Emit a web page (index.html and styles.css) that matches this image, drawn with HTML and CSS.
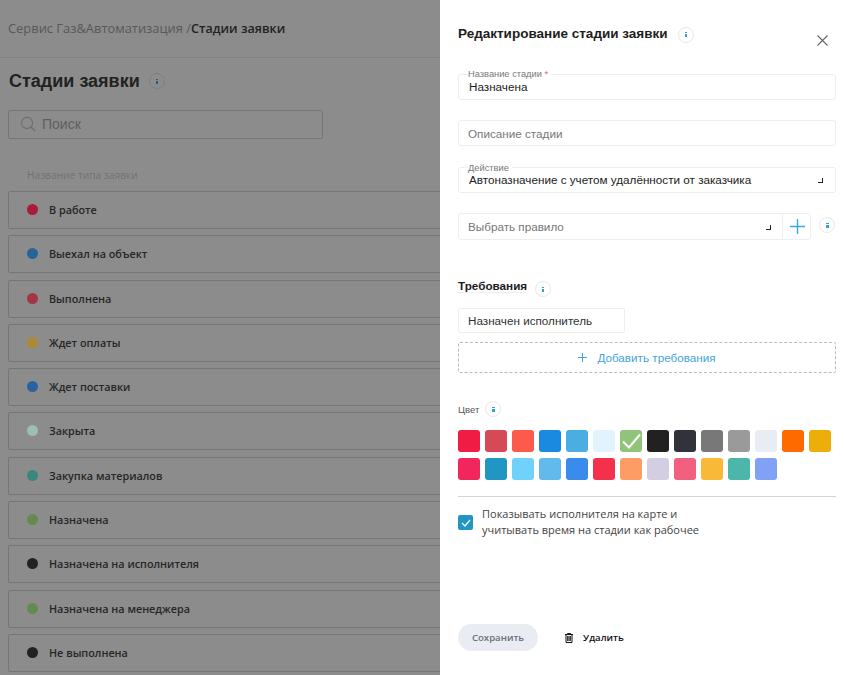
FILE: index.html
```html
<!DOCTYPE html>
<html lang="ru">
<head>
  <meta charset="UTF-8" />
  <title>Стадии заявки</title>
  <link rel="stylesheet" href="styles.css">
</head>
<body>
  <main class="page">
    <header class="topbar">
      <span class="crumb">Сервис Газ&amp;Автоматизация /</span><span class="crumb-current">Стадии заявки</span>
    </header>

    <div class="title-row">
      <h1>Стадии заявки</h1>
      <span class="info info-dim"><i></i></span>
    </div>

    <div class="search">
      <svg width="16" height="16" viewBox="0 0 16 16" fill="none" stroke="#6e6e6e" stroke-width="1.1">
        <circle cx="7" cy="7" r="5.6" />
        <path d="M11 11l4 4" />
      </svg>
      <span>Поиск</span>
    </div>

    <div class="table-head">Название типа заявки</div>

    <ul class="stages">
      <li><span class="dot" style="background:#ab1c3a"></span>В работе</li>
      <li><span class="dot" style="background:#28649c"></span>Выехал на объект</li>
      <li><span class="dot" style="background:#a03646"></span>Выполнена</li>
      <li><span class="dot" style="background:#ad8936"></span>Ждет оплаты</li>
      <li><span class="dot" style="background:#2a62a0"></span>Ждет поставки</li>
      <li><span class="dot" style="background:#a0bcb8"></span>Закрыта</li>
      <li><span class="dot" style="background:#3a877e"></span>Закупка материалов</li>
      <li><span class="dot" style="background:#648a50"></span>Назначена</li>
      <li><span class="dot" style="background:#222"></span>Назначена на исполнителя</li>
      <li><span class="dot" style="background:#648a50"></span>Назначена на менеджера</li>
      <li><span class="dot" style="background:#222"></span>Не выполнена</li>
    </ul>
  </main>

  <aside class="panel">
    <div class="panel-head">
      <h2>Редактирование стадии заявки</h2>
      <span class="info"><i></i></span>
      <svg class="close" width="11" height="11" viewBox="0 0 11 11" stroke="#666" stroke-width="1.1">
        <path d="M.5.5l10 10M10.5.5l-10 10" />
      </svg>
    </div>

    <div class="field field-name">
      <label>Название стадии <em>*</em></label>
      <span class="value">Назначена</span>
    </div>

    <div class="field field-desc">
      <span class="placeholder">Описание стадии</span>
    </div>

    <div class="field field-action">
      <label>Действие</label>
      <span class="value">Автоназначение с учетом удалённости от заказчика</span>
      <b class="caret"></b>
    </div>

    <div class="rule-row">
      <div class="field field-rule">
        <span class="placeholder">Выбрать правило</span>
        <b class="caret"></b>
        <span class="rule-add">
          <svg width="15" height="15" viewBox="0 0 15 15" stroke="#3ea6dc" stroke-width="1.4">
            <path d="M7.5 0v15M0 7.5h15" />
          </svg>
        </span>
      </div>
      <span class="info info-blue"><i></i></span>
    </div>

    <div class="req-head">
      <h3>Требования</h3>
      <span class="info"><i></i></span>
    </div>

    <div class="req-chip">Назначен исполнитель</div>

    <div class="req-add">
      <svg width="9" height="9" viewBox="0 0 9 9" stroke="#3ea6dc" stroke-width="1">
        <path d="M4.5 0v9M0 4.5h9" />
      </svg>
      Добавить требования
    </div>

    <div class="color-head">
      <span>Цвет</span>
      <span class="info info-blue"><i></i></span>
    </div>

    <div class="swatches">
      <span style="background:#f01c44"></span>
      <span style="background:#d64a58"></span>
      <span style="background:#fb5a4d"></span>
      <span style="background:#1a8ae0"></span>
      <span style="background:#4aaee2"></span>
      <span style="background:#e2f3fd"></span>
      <span style="background:#90c478">
        <svg width="22" height="22" viewBox="0 0 22 22" fill="none" stroke="#fff" stroke-width="2">
          <path d="M3 11.5l6 6L20 4.5" />
        </svg>
      </span>
      <span style="background:#212121"></span>
      <span style="background:#32323a"></span>
      <span style="background:#787878"></span>
      <span style="background:#9a9a9a"></span>
      <span style="background:#e8edf4"></span>
      <span style="background:#ff6a00"></span>
      <span style="background:#eeae0a"></span>
      <span style="background:#f0265c"></span>
      <span style="background:#2196c4"></span>
      <span style="background:#70d2fb"></span>
      <span style="background:#62baec"></span>
      <span style="background:#3a8cec"></span>
      <span style="background:#f4304c"></span>
      <span style="background:#fe9c66"></span>
      <span style="background:#d4cee2"></span>
      <span style="background:#f26080"></span>
      <span style="background:#f8b838"></span>
      <span style="background:#4cb6aa"></span>
      <span style="background:#80a2f4"></span>
    </div>

    <div class="check-row">
      <span class="checkbox">
        <svg width="10" height="8" viewBox="0 0 10 8" fill="none" stroke="#fff" stroke-width="1.2">
          <path d="M1 4l3 3 5-6" />
        </svg>
      </span>
      <p>Показывать исполнителя на карте и<br>учитывать время на стадии как рабочее</p>
    </div>

    <div class="actions">
      <button class="save">Сохранить</button>
      <button class="remove">
        <svg width="8" height="10" viewBox="0 0 8 10" fill="none" stroke="#111" stroke-width="1">
          <path d="M0 1.5h8M2.5 1.5V.5h3v1M1 1.5v8h6v-8M2.7 3v5M4 3v5M5.3 3v5" />
        </svg>
        Удалить
      </button>
    </div>
  </aside>
</body>
</html>
```

FILE: styles.css
```css
* {
  box-sizing: border-box;
}

html, body {
  height: 100%;
}

body {
  margin: 0;
  height: 675px;
  overflow: hidden;
  background-color: #8c8c8c;
  color: #262626;
  font-family: 'Open Sans', 'Noto Sans', sans-serif;
}

/* dimmed page behind the panel */
.page {
  width: 844px;
}

.topbar {
  height: 58px;
  padding: 19px 8px 0;
  border-bottom: 1px solid #808080;
  font-size: 12.9px;
  line-height: 18px;
}

.crumb {
  color: #585858;
}

.crumb-current {
  font-size: 12.6px;
  font-weight: 600;
  color: #222;
}

.title-row {
  display: flex;
  align-items: center;
  gap: 9px;
  height: 24px;
  margin: 11px 0 0 9px;
}

h1 {
  margin: 0;
  font-family: 'Liberation Sans', sans-serif;
  font-size: 18px;
  font-weight: 700;
  color: #222;
}

.search {
  display: flex;
  align-items: center;
  gap: 6px;
  width: 315px;
  height: 29px;
  margin: 17px 0 0 8px;
  padding: 0 0 1px 11px;
  border: 1px solid #767676;
  border-radius: 2px;
  font-family: 'Liberation Sans', sans-serif;
  font-size: 14px;
  color: #5e5e5e;
}

.table-head {
  margin: 29px 0 0 27px;
  font-size: 10.2px;
  line-height: 14px;
  color: #727272;
}

.stages {
  list-style: none;
  margin: 9px 0 0 8px;
  padding: 0;
}

.stages li {
  display: flex;
  align-items: center;
  gap: 11px;
  height: 38px;
  margin-bottom: 6.3px;
  padding: 0 0 1px 18px;
  border: 1px solid #767676;
  border-radius: 2px;
  font-size: 10.8px;
  font-weight: 600;
  color: #262626;
}

.dot {
  width: 11px;
  height: 11px;
  border-radius: 50%;
}

/* info badges */
.info {
  display: inline-flex;
  align-items: center;
  justify-content: center;
  flex: none;
  width: 16px;
  height: 16px;
  border: 1px solid #e8e8e8;
  border-radius: 50%;
}

.info i {
  width: 2px;
  height: 5px;
  background-image: linear-gradient(#3a9ccf 1px, transparent 1px, transparent 2px, #3a9ccf 2px);
}

.info-dim {
  border-color: #808080;
}

.info-dim i {
  background-image: linear-gradient(#23617f 1px, transparent 1px, transparent 2px, #23617f 2px);
}

.info-blue i {
  width: 3px;
}

/* side panel */
.panel {
  position: absolute;
  top: 0;
  right: 0;
  width: 404px;
  height: 675px;
  padding: 0 8px 0 18px;
  background-color: #fff;
  font-family: 'Liberation Sans', sans-serif;
}

.panel-head {
  position: relative;
  display: flex;
  align-items: center;
  gap: 10px;
  height: 18px;
  margin-top: 24px;
}

.panel-head .info {
  margin-top: 3px;
}

h2 {
  margin: 0;
  font-size: 13.5px;
  font-weight: 700;
  color: #1d1d1d;
}

.close {
  position: absolute;
  top: 11px;
  right: 8px;
}

.field {
  position: relative;
  display: flex;
  align-items: center;
  height: 26px;
  padding-left: 10px;
  border: 1px solid #eee;
  border-radius: 3px;
  font-size: 11.7px;
  color: #222;
}

.field label {
  position: absolute;
  top: -6px;
  left: 9px;
  font-size: 9.3px;
  line-height: 10px;
  padding-right: 3px;
  background-color: #fff;
  color: #777;
}

.field label em {
  font-style: normal;
  color: #d66;
}

.value {
  margin-top: -2px;
}

.placeholder {
  margin: 1px 0 0 -1px;
  color: #777;
}

.field-name {
  margin-top: 32px;
}

.field-desc {
  margin-top: 20px;
}

.field-action {
  margin-top: 21px;
}

.field-action label {
  top: -5px;
}

.caret {
  position: absolute;
  right: 12px;
  top: 10px;
  width: 5px;
  height: 5px;
  border-right: 1px solid #222;
  border-bottom: 1px solid #222;
}

.rule-row {
  display: flex;
  gap: 8px;
  margin-top: 20px;
}

.field-rule {
  width: 353px;
  height: 27px;
}

.field-rule .placeholder {
  margin-top: -1px;
}

.field-rule .caret {
  top: 11px;
  right: 39px;
}

.rule-row > .info {
  margin-top: 4px;
}

.rule-add {
  position: absolute;
  top: 0;
  right: 0;
  bottom: 0;
  display: flex;
  align-items: center;
  justify-content: center;
  width: 28px;
  padding-left: 1px;
  border-left: 1px solid #eee;
}

.req-head {
  display: flex;
  align-items: center;
  gap: 8px;
  margin-top: 37px;
  height: 18px;
}

h3 {
  margin: 0;
  font-size: 11.7px;
  font-weight: 700;
  color: #1d1d1d;
  border-bottom: 1px solid #eee;
}

.req-head .info {
  margin-top: 6px;
}

.req-chip {
  display: flex;
  align-items: center;
  width: 167px;
  height: 25px;
  margin-top: 13px;
  padding-left: 9px;
  border: 1px solid #eee;
  border-radius: 2px;
  font-size: 11.7px;
  color: #333;
}

.req-add {
  display: flex;
  align-items: center;
  justify-content: center;
  gap: 10px;
  height: 31px;
  margin-top: 9px;
  border: 1px dashed #bbb;
  border-radius: 2px;
  font-size: 11.7px;
  color: #3ea6dc;
}

.color-head {
  display: flex;
  align-items: center;
  gap: 6px;
  margin-top: 28px;
  height: 16px;
  font-size: 9.5px;
  color: #555;
}

.swatches {
  display: grid;
  grid-template-columns: repeat(14, 22px);
  column-gap: 5px;
  row-gap: 6px;
  margin-top: 13px;
  padding-bottom: 16px;
  border-bottom: 1px solid #d4d4d4;
}

.swatches span {
  display: block;
  width: 22px;
  height: 22px;
  border-radius: 3px;
}

.swatches svg {
  display: block;
}

.check-row {
  display: flex;
  gap: 9px;
  margin-top: 9px;
  font-family: 'Open Sans', 'Noto Sans', sans-serif;
}

.checkbox {
  display: flex;
  align-items: center;
  justify-content: center;
  flex: none;
  width: 15px;
  height: 15px;
  margin-top: 9px;
  border-radius: 2px;
  background-color: #2196c4;
}

.check-row p {
  margin: 0;
  font-size: 11px;
  line-height: 16px;
  color: #444;
}

.actions {
  display: flex;
  align-items: center;
  gap: 27px;
  margin-top: 86px;
  font-family: 'Open Sans', 'Noto Sans', sans-serif;
}

button {
  border: none;
  background: none;
  padding: 0;
  font-family: inherit;
  font-size: 9.6px;
  font-weight: 600;
}

.save {
  width: 80px;
  height: 27px;
  border-radius: 14px;
  background-color: #e9edf3;
  color: #6b7076;
}

.remove {
  display: flex;
  align-items: center;
  gap: 10px;
  color: #111;
}
```
